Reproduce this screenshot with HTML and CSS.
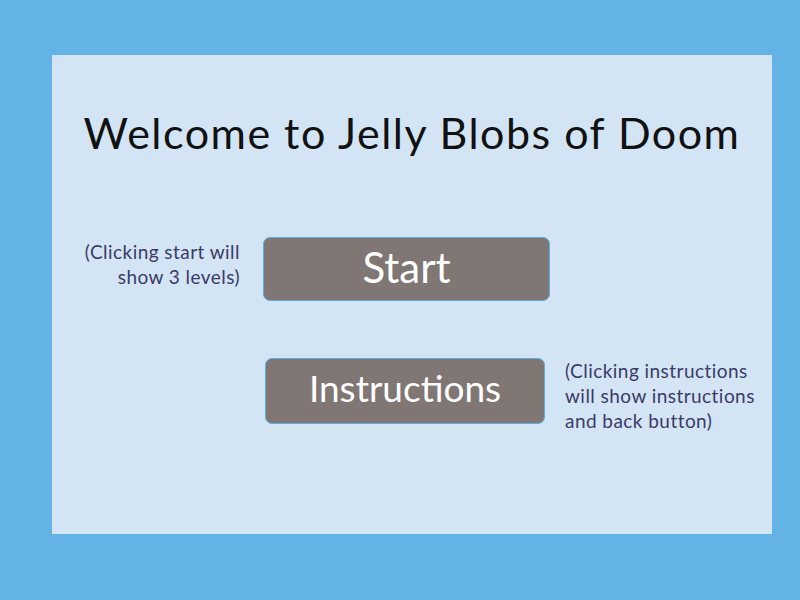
FILE: index.html
```html
<!DOCTYPE html>
<html>
<head>
<meta charset="utf-8">
<link rel="stylesheet" href="styles.css">
</head>
<body>
<main class="panel">
  <h1 class="title">Welcome to Jelly Blobs of Doom</h1>
  <div class="row row-start">
    <p class="note note-left">(Clicking start will<br>show 3 levels)</p>
    <button class="btn btn-start">Start</button>
  </div>
  <div class="row row-instr">
    <button class="btn btn-instr">Instructions</button>
    <p class="note note-right">(Clicking instructions<br>will show instructions<br>and back button)</p>
  </div>
</main>
</body>
</html>
```
FILE: styles.css
```css
html, body {
  margin: 0;
  padding: 0;
}
body {
  background: #63b3e6;
  width: 800px;
  height: 600px;
  overflow: hidden;
  font-family: "Lato", "DejaVu Sans", sans-serif;
}
.panel {
  margin: 55px 0 0 52px;
  width: 720px;
  height: 479px;
  background: #d3e4f5;
  display: flex;
  flex-direction: column;
}
.title {
  margin: 52px 0 0 0;
  font-weight: 400;
  font-size: 43px;
  line-height: 52px;
  letter-spacing: 1.5px;
  color: #111;
  text-align: center;
}
.row {
  display: flex;
  align-items: flex-start;
}
.row-start {
  margin-top: 78px;
}
.row-instr {
  margin-top: 57px;
}
.note {
  margin: 0;
  font-size: 19px;
  line-height: 25px;
  letter-spacing: 0.45px;
  color: #3b3b68;
}
.note-left {
  width: 188px;
  text-align: right;
  margin-top: 2px;
}
.note-right {
  margin-left: 20px;
  margin-top: 0;
}
.btn {
  font-family: inherit;
  background: #807775;
  color: #fff;
  border: 1px solid #5aaee6;
  border-radius: 7px;
  padding: 0 0 4px 0;
  display: flex;
  align-items: center;
  justify-content: center;
  box-sizing: border-box;
}
.btn-start {
  margin-left: 23px;
  width: 287px;
  height: 64px;
  font-size: 42px;
}
.btn-instr {
  margin-left: 213px;
  width: 280px;
  height: 66px;
  font-size: 37px;
  padding-bottom: 8px;
}
```
